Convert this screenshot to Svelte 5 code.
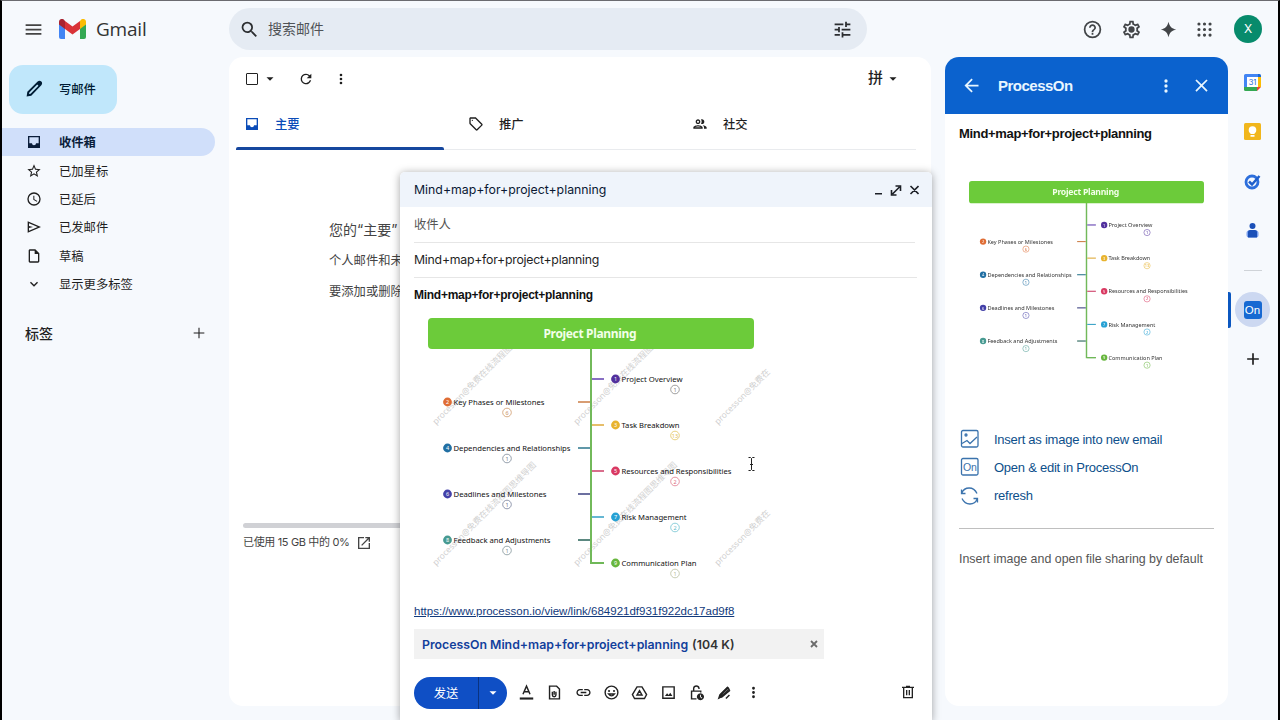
<script>
	const icons = {
		menu: 'M3 18h18v-2H3v2zm0-5h18v-2H3v2zm0-7v2h18V6H3z',
		search:
			'M15.5 14h-.79l-.28-.27A6.47 6.47 0 0 0 16 9.5 6.5 6.5 0 1 0 9.5 16c1.61 0 3.09-.59 4.23-1.57l.27.28v.79l5 4.99L20.49 19l-4.99-5zm-6 0C7.01 14 5 11.99 5 9.5S7.01 5 9.5 5 14 7.01 14 9.5 11.99 14 9.5 14z',
		tune: 'M3 17v2h6v-2H3zM3 5v2h10V5H3zm10 16v-2h8v-2h-8v-2h-2v6h2zM7 9v2H3v2h4v2h2V9H7zm14 4v-2H11v2h10zm-6-4h2V7h4V5h-4V3h-2v6z',
		refresh:
			'M17.65 6.35A7.96 7.96 0 0 0 12 4a8 8 0 1 0 7.73 10h-2.08A5.99 5.99 0 1 1 12 6c1.66 0 3.14.69 4.22 1.78L13 11h7V4l-2.35 2.35z',
		more: 'M12 8a2 2 0 1 0 0-4 2 2 0 0 0 0 4zm0 2a2 2 0 1 0 0 4 2 2 0 0 0 0-4zm0 6a2 2 0 1 0 0 4 2 2 0 0 0 0-4z',
		inbox:
			'M21 3H3v18h18V3zm-2 11h-4c0 1.66-1.35 3-3 3s-3-1.34-3-3H5V5h14v9z',
		star: 'M22 9.24l-7.19-.62L12 2 9.19 8.63 2 9.24l5.46 4.73L5.82 21 12 17.27 18.18 21l-1.63-7.03L22 9.24zM12 15.4l-3.76 2.27 1-4.28-3.32-2.88 4.38-.38L12 6.1l1.71 4.04 4.38.38-3.32 2.88 1 4.28L12 15.4z',
		clock:
			'M12 2a10 10 0 1 0 0 20 10 10 0 0 0 0-20zm0 18a8 8 0 1 1 0-16 8 8 0 0 1 0 16zm.5-13H11v6l5.25 3.15.75-1.23-4.5-2.67z',
		send: 'M2.5 20.5V3.5L22.5 12l-20 8.5zM4.5 17.5L17.5 12 4.500 6.500v4l6 1.500-6 1.500v4z',
		draft: 'M14 2H6c-1.1 0-2 .9-2 2v16c0 1.1.9 2 2 2h12c1.1 0 2-.9 2-2V8l-6-6zM6 20V4h7v5h5v11H6z',
		down: 'M16.59 8.59 12 13.17 7.41 8.59 6 10l6 6 6-6z',
		plus: 'M19 13h-6v6h-2v-6H5v-2h6V5h2v6h6v2z',
		thinPlus: 'M20 12.8h-7.2V20h-1.600v-7.200H4v-1.600h7.200V4h1.600v7.200H20z',
		help: 'M11 18h2v-2h-2v2zm1-16a10 10 0 1 0 0 20 10 10 0 0 0 0-20zm0 18a8 8 0 1 1 0-16 8 8 0 0 1 0 16zm0-14c-2.210 0-4 1.790-4 4h2c0-1.100.9-2 2-2s2 .9 2 2c0 2-3 1.750-3 5h2c0-2.250 3-2.500 3-5 0-2.210-1.790-4-4-4z',
		settings:
			'M19.43 12.98c.04-.32.07-.64.07-.98 0-.34-.03-.66-.07-.98l2.11-1.65c.19-.15.24-.42.12-.64l-2-3.46c-.09-.16-.26-.25-.44-.25-.06 0-.12.01-.17.03l-2.49 1c-.52-.4-1.08-.73-1.69-.98l-.38-2.65C14.46 2.18 14.25 2 14 2h-4c-.25 0-.46.18-.49.42l-.38 2.65c-.61.25-1.17.59-1.69.98l-2.49-1c-.06-.02-.12-.03-.18-.03-.17 0-.34.09-.43.25l-2 3.46c-.13.22-.07.49.12.64l2.11 1.65c-.04.32-.07.65-.07.98 0 .33.03.66.07.98l-2.11 1.65c-.19.15-.24.42-.12.64l2 3.46c.09.16.26.25.44.25.06 0 .12-.01.17-.03l2.49-1c.52.4 1.08.73 1.69.98l.38 2.65c.03.24.24.42.49.42h4c.25 0 .46-.18.49-.42l.38-2.65c.61-.25 1.17-.59 1.69-.98l2.49 1c.06.02.12.03.18.03.17 0 .34-.09.43-.25l2-3.46c.12-.22.07-.49-.12-.64l-2.11-1.65zm-1.98-1.71c.04.31.05.52.05.73 0 .21-.02.43-.05.73l-.14 1.13.89.7 1.08.84-.7 1.21-1.27-.51-1.04-.42-.9.68c-.43.32-.84.56-1.25.73l-1.06.43-.16 1.13-.2 1.35h-1.4l-.19-1.35-.16-1.13-1.06-.43c-.43-.18-.83-.41-1.23-.71l-.91-.7-1.06.43-1.27.51-.7-1.21 1.08-.84.89-.7-.14-1.13c-.03-.31-.05-.54-.05-.74s.02-.43.05-.73l.14-1.13-.89-.7-1.08-.84.7-1.21 1.27.51 1.04.42.9-.68c.43-.32.84-.56 1.25-.73l1.06-.43.16-1.13.2-1.35h1.39l.19 1.35.16 1.13 1.06.43c.43.18.83.41 1.23.71l.91.7 1.06-.43 1.27-.51.7 1.21-1.07.85-.89.7.14 1.13zM12 8.4a3.600 3.600 0 1 0 0 7.200 3.600 3.600 0 0 0 0-7.200z',
		spark: 'M12 1c1.300 6.500 4.500 9.700 11 11-6.500 1.300-9.700 4.500-11 11-1.300-6.500-4.500-9.700-11-11 6.500-1.300 9.700-4.500 11-11z',
		apps: 'M5 3a2 2 0 1 0 0 4 2 2 0 0 0 0-4zm7 0a2 2 0 1 0 0 4 2 2 0 0 0 0-4zm7 0a2 2 0 1 0 0 4 2 2 0 0 0 0-4zM5 10a2 2 0 1 0 0 4 2 2 0 0 0 0-4zm7 0a2 2 0 1 0 0 4 2 2 0 0 0 0-4zm7 0a2 2 0 1 0 0 4 2 2 0 0 0 0-4zM5 17a2 2 0 1 0 0 4 2 2 0 0 0 0-4zm7 0a2 2 0 1 0 0 4 2 2 0 0 0 0-4zm7 0a2 2 0 1 0 0 4 2 2 0 0 0 0-4z',
		tag: 'M21.410 11.580l-9-9C12.050 2.220 11.550 2 11 2H4c-1.100 0-2 .9-2 2v7c0 .55.22 1.050.59 1.420l9 9c.78.78 2.040.78 2.820 0l7-7c.78-.78.78-2.060 0-2.840zM13 20.010L4 11V4h7l9 9-7 7.010zM6.500 5.500a1 1 0 1 0 0 2 1 1 0 0 0 0-2z',
		people:
			'M9 13.750c-2.340 0-7 1.170-7 3.500V19h14v-1.750c0-2.330-4.660-3.500-7-3.500zM4.340 17c.84-.58 2.870-1.250 4.660-1.250s3.820.67 4.660 1.250H4.340zM9 12c1.930 0 3.500-1.570 3.500-3.500S10.930 5 9 5 5.500 6.570 5.500 8.500 7.070 12 9 12zm0-5c.83 0 1.500.67 1.500 1.500S9.830 10 9 10s-1.500-.67-1.500-1.500S8.170 7 9 7zm7.040 6.810c1.160.84 1.960 1.960 1.960 3.440V19h4v-1.750c0-2.020-3.500-3.170-5.960-3.440zM15 12c1.930 0 3.500-1.570 3.500-3.500S16.930 5 15 5c-.54 0-1.040.13-1.500.35.63.89 1 1.980 1 3.150s-.37 2.260-1 3.150c.46.22.96.35 1.500.35z',
		caret: 'M6 9l6 6 6-6z',
		pencil:
			'M3 21l.8-5.300L15.600 4c1.200-1.200 3-1.200 4.200 0s1.200 3 0 4.200L8.300 20.200 3 21zm2.800-2.800l1.700-.3 9-9-1.400-1.400-9 9-.3 1.700z',
		back: 'M20 11H7.830l5.590-5.590L12 4l-8 8 8 8 1.410-1.410L7.830 13H20v-2z',
		close: 'M19 6.410L17.590 5 12 10.590 6.410 5 5 6.410 10.590 12 5 17.590 6.410 19 12 13.410 17.590 19 19 17.590 13.410 12z',
		link: 'M3.900 12c0-1.710 1.390-3.100 3.100-3.100h4V7H7c-2.760 0-5 2.240-5 5s2.240 5 5 5h4v-1.900H7c-1.710 0-3.100-1.390-3.100-3.100zM8 13h8v-2H8v2zm9-6h-4v1.900h4c1.710 0 3.100 1.390 3.100 3.100s-1.390 3.100-3.100 3.100h-4V17h4c2.760 0 5-2.240 5-5s-2.240-5-5-5z',
		open: 'M3 3h9v2H5v14h14v-7h2v9H3zM14 3h7v7h-2V6.410l-9.830 9.830-1.410-1.410L17.590 5H14z'
	};

	// outline icons of the composer toolbar, in order
	const tools = [
		['M7 14.5 12 3l5 11.5M8.700 11h6.600', 'M2.500 19h19v3h-19z'],
		['M5 3h10l4 4v14H5zM9 11v4.500a2.500 2.500 0 0 0 5 0V11M11.500 10v5', ''],
		null,
		['M12 3a9 9 0 1 0 0 18 9 9 0 0 0 0-18zM7.800 14q4.200 5.500 8.400 0z', 'M8.500 8.300a1.400 1.400 0 1 0 .1 0zM15.500 8.300a1.400 1.400 0 1 0 .1 0z'],
		['M8.500 4h7L22 15l-3 5.500H5L2 15zM12 9.500l3.500 6h-7z', ''],
		['M4 4h16v16H4z', 'M7 17l3-4 2.200 2.500L14.500 12.500 17.500 17z'],
		['M12 21H5V10h13v2M8 10V6a3.800 3.800 0 0 1 7.500 0v1', 'M17.500 13a5 5 0 1 0 .1 0zM17 15h1.200v3l2 1.500-.7 1-2.500-2z'],
		['M4 20 5.500 15.500 16 5l2.500 2.500L8 18zM14 20.500l5-5', 'M4 20l2-6L16.500 3.500l2 2L9 15l10-7 1.500 1.500L9 19z']
	];

	const nav = [
		['inbox', '收件箱'],
		['star', '已加星标'],
		['clock', '已延后'],
		['send', '已发邮件'],
		['draft', '草稿'],
		['down', '显示更多标签']
	];

	const tabs = [
		['inbox', '主要'],
		['tag', '推广'],
		['people', '社交']
	];

	// x/y are the centre of the numbered dot, w the drawn width of the label
	const nodes = [
		{ n: 1, x: 187.5, y: 61, w: 61, text: 'Project Overview', color: '#51309d', line: '#6b4bb5', count: 1, badge: '#777' },
		{ n: 2, x: 19.5, y: 84, w: 91, text: 'Key Phases or Milestones', color: '#df6d35', line: '#cf8551', count: 6, badge: '#c98d57' },
		{ n: 3, x: 187.5, y: 107, w: 58, text: 'Task Breakdown', color: '#e8b32e', line: '#e0ae45', count: 13, badge: '#e0bd4c' },
		{ n: 4, x: 19.5, y: 130, w: 117, text: 'Dependencies and Relationships', color: '#216fa3', line: '#397f94', count: 1, badge: '#6a7889' },
		{ n: 5, x: 187.5, y: 153, w: 110, text: 'Resources and Responsibilities', color: '#d93962', line: '#d04a70', count: 2, badge: '#dc6a80' },
		{ n: 6, x: 19.5, y: 176, w: 93, text: 'Deadlines and Milestones', color: '#4340a8', line: '#484d89', count: 1, badge: '#66708c' },
		{ n: 7, x: 187.5, y: 199, w: 65, text: 'Risk Management', color: '#26a1d4', line: '#40a5c8', count: 2, badge: '#5fbccb' },
		{ n: 8, x: 19.5, y: 222, w: 97, text: 'Feedback and Adjustments', color: '#479a91', line: '#326b61', count: 1, badge: '#71858b' },
		{ n: 9, x: 187.5, y: 245, w: 75, text: 'Communication Plan', color: '#67b63d', line: '#6fb858', count: 1, badge: '#b2b794' }
	];

	const full = 'processon@免费在线流程图思维导图';
	const watermarks = [
		[8, 107, full],
		[149, 107, full],
		[290, 107, 'processon@免费在'],
		[8, 248, full],
		[149, 248, full],
		[290, 248, 'processon@免费在']
	];
</script>

{#snippet icon(name, size = 18)}
	<svg class="icon" width={size} height={size} viewBox="0 0 24 24"><path d={icons[name]} fill-rule="evenodd" /></svg>
{/snippet}

{#snippet mindMap(width, marked)}
	<svg class="map" class:small={!marked} {width} viewBox="0 0 350 262">
		{#if marked}
			{#each watermarks as [x, y, text]}
				<text class="watermark" transform="translate({x} {y}) rotate(-45)">{text}</text>
			{/each}
		{/if}
		<path d="M163 30V245H176" fill="none" stroke="#72b95a" stroke-width="2" />
		<rect width="326" height="31" rx="4" fill="#6ccb3a" />
		<text class="root" x="162" y="20" text-anchor="middle" textLength="93">Project Planning</text>
		{#each nodes as node}
			{@const left = node.x < 100}
			<path d={left ? `M150 ${node.y}h12` : `M164 ${node.y}h12`} stroke={node.line} stroke-width="1.6" />
			<circle cx={node.x} cy={node.y} r="4.4" fill={node.color} />
			<text class="digit" x={node.x} y={node.y + 2.3}>{node.n}</text>
			<text class="label" x={node.x + 6} y={node.y + 3} textLength={node.w} lengthAdjust="spacingAndGlyphs">{node.text}</text>
			<circle cx={left ? 79 : 247} cy={node.y + 10.5} r="4.3" fill="none" stroke={marked ? node.badge : node.color} stroke-width=".7" />
			<text class="count" x={left ? 79 : 247} y={node.y + 12.6} fill={marked ? node.badge : node.color}>{node.count}</text>
		{/each}
	</svg>
{/snippet}

<div class="app">
	<header>
		<div class="brand">
			{@render icon('menu', 21)}
			<svg class="logo" width="27" height="20" viewBox="0 0 27 20">
				<path d="M0 4v14q0 2 2 2h4V8z" fill="#4285f4" />
				<path d="M21 8v12h4q2 0 2-2V4z" fill="#34a853" />
				<path d="M21 2v8l6-4.500V3c0-3-3-4-5-2.300z" fill="#fbbc04" />
				<path d="M6 10V2l7.500 5.500L21 2v8l-7.500 5.500z" fill="#d93338" />
				<path d="M0 3v2.500L6 10V2L5 .7C3-1 0 0 0 3z" fill="#a82330" />
			</svg>
			<span class="brand-name">Gmail</span>
		</div>
		<div class="search">
			{@render icon('search', 21)}
			<span>搜索邮件</span>
			{@render icon('tune', 21)}
		</div>
		<div class="account">
			{@render icon('help', 21)}
			{@render icon('settings', 21)}
			{@render icon('spark', 17)}
			{@render icon('apps', 19)}
			<div class="avatar">X</div>
		</div>
	</header>

	<div class="columns">
		<aside class="sidebar">
			<button class="write">{@render icon('pencil', 21)}<span>写邮件</span></button>
			<nav>
				{#each nav as [name, label], i}
					<div class="nav-item" class:active={i === 0}>{@render icon(name, 16)}<span>{label}</span></div>
				{/each}
			</nav>
			<div class="labels"><span>标签</span>{@render icon('thinPlus', 16)}</div>
		</aside>

		<main>
			<div class="toolbar">
				<i class="checkbox"></i>
				{@render icon('caret', 14)}
				<div class="reload">{@render icon('refresh', 16)}</div>
				{@render icon('more', 16)}
				<div class="input-tool"><b>拼</b>{@render icon('caret', 14)}</div>
			</div>
			<div class="tabs">
				{#each tabs as [name, label], i}
					<div class="tab" class:active={i === 0}>{@render icon(name, 16)}<span>{label}</span></div>
				{/each}
			</div>
			<div class="empty">
				<p class="lead">您的“主要”</p>
				<p>个人邮件和未</p>
				<p>要添加或删除</p>
			</div>
			<div class="storage">
				<div class="storage-bar"></div>
				<div class="storage-text"><span>已使用 15 GB 中的 0%</span>{@render icon('open', 16)}</div>
			</div>
		</main>

		<section class="panel">
			<div class="panel-head">
				{@render icon('back', 21)}
				<h2>ProcessOn</h2>
				{@render icon('more', 20)}
				{@render icon('close', 21)}
			</div>
			<div class="panel-body">
				<h3>Mind+map+for+project+planning</h3>
				<div class="preview">{@render mindMap(252.3, false)}</div>
				<div class="actions">
					<div class="action">
						<svg width="20" height="20" viewBox="0 0 20 20"><rect x="2.500" y="1.500" width="16.500" height="16.500" rx="1.500" /><circle cx="7" cy="6" r="1" /><path d="M3 14.500l5-3 3 3 7-6.500" /></svg>
						Insert as image into new email
					</div>
					<div class="action">
						<svg width="20" height="20" viewBox="0 0 20 20"><rect x="2.500" y="1.500" width="16.500" height="16.500" rx="1.500" /><text x="4" y="14">On</text></svg>
						Open &amp; edit in ProcessOn
					</div>
					<div class="action">
						<svg width="20" height="20" viewBox="0 0 20 20"><path d="M2.500 3.500v4h4M2.800 7C5.500.5 14.500 0 18 7.500M18.500 16.500v-4h-4M18.200 13C15.500 19.500 6.500 20 3 12.500" /></svg>
						refresh
					</div>
				</div>
				<p class="hint">Insert image and open file sharing by default</p>
			</div>
		</section>

		<aside class="rail">
			<svg width="17" height="17" viewBox="0 0 17 17"><path d="M0 1.500Q0 0 1.500 0H14v3H3v11H0z" fill="#4285f4" /><path d="M14 0h1.500Q17 0 17 1.500V3h-3z" fill="#1967d2" /><path d="M14 3h3v10h-3z" fill="#fbbc04" /><path d="M0 13h13v4H1.500Q0 17 0 15.500z" fill="#34a853" /><path d="M13 13h4l-4 4z" fill="#ea4335" /><path d="M3 3h11v10H3z" fill="#fff" /><text x="8.500" y="11" text-anchor="middle" font-size="7.500" fill="#1967d2">31</text></svg>
			<svg width="17" height="17" viewBox="0 0 17 17"><rect width="17" height="17" rx="1.500" fill="#f1b61c" /><circle cx="8.500" cy="7" r="3.800" fill="#fff" /><path d="M6.500 9h4v2h-4zM6.500 12h4v1.700h-4z" fill="#fff" /></svg>
			<svg width="17" height="17" viewBox="0 0 17 17"><circle cx="8" cy="9" r="6" fill="none" stroke="#2d6fdc" stroke-width="2.800" /><path d="M5 8.500l3 3L15.500 3" fill="none" stroke="#1f5fcb" stroke-width="2.500" /></svg>
			<svg width="17" height="17" viewBox="0 0 17 17"><circle cx="8.500" cy="4" r="3" fill="#1b50b8" /><rect x="2.500" y="8.500" width="12" height="7" rx="2.500" fill="#7aa0ee" /><path d="M4 9.500q0-1.500 2-1.500h5q2 0 2 1.500v6H4z" fill="#1b50b8" /></svg>
			<hr />
			<div class="addon"><div class="addon-icon">On</div></div>
			{@render icon('plus', 20)}
		</aside>
	</div>

	<div class="composer">
		<div class="composer-head">
			<span>Mind+map+for+project+planning</span>
			<svg width="45" height="14" viewBox="0 0 45 14"><path d="M1 10.700h7M18.500 11l7-7M21.500 3h5v5M17.500 7v5h5M36.500 3l8 8M44.500 3l-8 8" /></svg>
		</div>
		<div class="composer-body">
			<div class="field to">收件人</div>
			<div class="field subject">Mind+map+for+project+planning</div>
			<b class="doc-title">Mind+map+for+project+planning</b>
			<div class="doc-map">{@render mindMap(350, true)}</div>
			<a href="https://www.processon.io/view/link/684921df931f922dc17ad9f8">https://www.processon.io/view/link/684921df931f922dc17ad9f8</a>
			<div class="attachment">
				<span class="file">ProcessOn Mind+map+for+project+planning</span>
				<span class="size">(104 K)</span>
				<svg width="8" height="8" viewBox="0 0 8 8"><path d="M1 1l6 6M7 1L1 7" stroke="#6b6b6b" stroke-width="1.800" /></svg>
			</div>
			<div class="composer-tools">
				<div class="send-group">
					<button class="send">发送</button>
					<button class="send-more">{@render icon('caret', 14)}</button>
				</div>
				<div class="tools">
					{#each tools as tool}
						{#if tool}
							<svg class="tool" width="17" height="17" viewBox="0 0 24 24"><path class="stroke" d={tool[0]} /><path d={tool[1]} /></svg>
						{:else}
							{@render icon('link', 17)}
						{/if}
					{/each}
					{@render icon('more', 17)}
				</div>
				<svg class="trash" width="16" height="16" viewBox="0 0 24 24"><path class="stroke" d="M5.500 6v14.500h13V6M3 5h18M9 3.500h6M10 9v8M14 9v8" /></svg>
			</div>
		</div>
	</div>

	<svg class="cursor" width="9" height="16" viewBox="0 0 9 16"><path d="M1.500 1.500h2l1 1 1-1h2M4.500 2.500v11M1.500 14.500h2l1-1 1 1h2M3 8.500h3" /></svg>
</div>

<style>
	:global(body) {
		margin: 0;
		overflow: hidden;
	}
	.app {
		position: relative;
		box-sizing: border-box;
		width: 1280px;
		height: 720px;
		overflow: hidden;
		border: solid #000;
		border-width: 0 2px;
		border-top: 1px solid #6b6b70;
		background: #f6f9fd;
		color: #1f1f1f;
		font-family: Inter, 'Noto Sans CJK SC', sans-serif;
		font-size: 12.3px;
	}
	button {
		border: 0;
		padding: 0;
		font: inherit;
	}
	p,
	h2,
	h3 {
		margin: 0;
	}
	svg {
		display: block;
		flex: none;
	}
	.icon {
		fill: currentColor;
	}

	header {
		display: flex;
		align-items: center;
		height: 56px;
	}
	.brand {
		display: flex;
		align-items: center;
		width: 206px;
		padding-left: 21px;
		color: #444;
	}
	.logo {
		margin-left: 15px;
	}
	.brand-name {
		margin-left: 10px;
		font-family: 'Open Sans', sans-serif;
		font-size: 19px;
		letter-spacing: -0.2px;
		color: #333;
	}
	.search {
		display: flex;
		align-items: center;
		box-sizing: border-box;
		width: 638px;
		height: 42px;
		padding: 0 14px 0 10px;
		border-radius: 21px;
		background: #e5ebf3;
		color: #2b2d30;
	}
	.search span {
		flex: 1;
		margin-left: 8px;
		padding-bottom: 2px;
		font-size: 14px;
		color: #505357;
	}
	.account {
		display: flex;
		align-items: center;
		flex: 1;
		justify-content: flex-end;
		padding-right: 16px;
		color: #424548;
	}
	.account :global(svg) {
		margin-right: 18px;
	}
	.avatar {
		width: 28px;
		height: 28px;
		margin-left: 2px;
		border-radius: 50%;
		background: #078b6c;
		color: #fff;
		font-size: 12px;
		line-height: 28px;
		text-align: center;
	}

	.columns {
		display: flex;
		height: 649px;
	}
	.sidebar {
		width: 227px;
	}
	.write {
		display: flex;
		align-items: center;
		width: 108px;
		height: 49px;
		margin: 8px 0 14px 7px;
		padding: 0 0 2px 15px;
		gap: 14px;
		border-radius: 14px;
		background: #c0e7fb;
		color: #001d35;
		font-weight: 500;
	}
	.nav-item {
		display: flex;
		align-items: center;
		width: 213px;
		height: 28.4px;
		box-sizing: border-box;
		padding-left: 24px;
		gap: 17px;
		border-radius: 0 14px 14px 0;
	}
	.nav-item.active {
		background: #d0dffa;
		color: #0a1d3a;
		font-weight: 700;
	}
	.labels {
		display: flex;
		align-items: center;
		justify-content: space-between;
		width: 182px;
		height: 28px;
		margin: 21px 0 0 23px;
		font-size: 14px;
		font-weight: 500;
	}

	main {
		display: flex;
		flex-direction: column;
		width: 702px;
		border-radius: 14px;
		background: #fff;
	}
	.toolbar {
		display: flex;
		align-items: center;
		height: 43px;
		padding: 0 31px 0 17px;
	}
	.checkbox {
		width: 10px;
		height: 10px;
		margin-right: 5px;
		border: 1.5px solid #222;
		border-radius: 1px;
	}
	.reload {
		margin: 0 19px 0 21px;
	}
	.input-tool {
		display: flex;
		align-items: center;
		gap: 3px;
		margin-left: auto;
		font-size: 15px;
		line-height: 20px;
	}
	.input-tool b {
		padding-bottom: 1px;
		font-weight: 500;
	}
	.tabs {
		display: flex;
		height: 49px;
		margin: 0 15px 0 7px;
		border-bottom: 1px solid #e9ebee;
	}
	.tab {
		position: relative;
		display: flex;
		align-items: center;
		width: 216px;
		box-sizing: border-box;
		padding: 0 0 1px 8px;
		gap: 15px;
		margin-right: 8px;
		font-weight: 500;
	}
	.tab span {
		padding-bottom: 1px;
	}
	.tab.active {
		color: #0b4cb8;
	}
	.tab.active::after {
		content: '';
		position: absolute;
		bottom: -1px;
		left: 0;
		width: 208px;
		height: 3px;
		border-radius: 2px 2px 0 0;
		background: #16479e;
	}
	.empty {
		margin: 64px 0 0 100px;
		color: #444;
		line-height: 31px;
	}
	.lead {
		font-size: 14px;
	}
	.storage {
		margin: auto 15px 155px 14px;
	}
	.storage-bar {
		height: 5px;
		border-radius: 3px;
		background: #d0d1d5;
	}
	.storage-text {
		display: flex;
		align-items: center;
		gap: 7px;
		margin-top: 6px;
		font-size: 11px;
		letter-spacing: -0.35px;
		line-height: 17px;
		color: #444;
	}

	.panel {
		display: flex;
		flex-direction: column;
		width: 283px;
		margin-left: 14px;
		overflow: hidden;
		border-radius: 14px;
		background: #fff;
		font-family: 'Liberation Sans', Arial, sans-serif;
	}
	.panel-head {
		display: flex;
		align-items: center;
		height: 57px;
		box-sizing: border-box;
		padding: 0 16px;
		background: #0b62ce;
		color: #e8f6ff;
	}
	.panel-head h2 {
		flex: 1;
		margin-left: 16px;
		font-size: 15px;
		letter-spacing: -0.5px;
	}
	.panel-head :global(svg:last-child) {
		margin-left: 15px;
	}
	.panel-body {
		padding: 11px 14px 0;
	}
	h3 {
		font-size: 13px;
		line-height: 17px;
		letter-spacing: -0.33px;
		color: #111;
	}
	.preview {
		height: 230px;
		padding: 39px 0 0 10px;
		filter: blur(0.3px);
	}
	.actions {
		margin-top: 14px;
		padding-bottom: 18px;
		border-bottom: 1px solid #bfbfbf;
	}
	.action {
		display: flex;
		align-items: center;
		height: 28.3px;
		gap: 15px;
		font-size: 13px;
		letter-spacing: -0.25px;
		color: #0d4f8b;
	}
	.action svg {
		fill: none;
		stroke: #3b73ad;
		stroke-width: 1.3;
	}
	.action svg text {
		fill: #3b73ad;
		stroke: none;
		font-size: 10.5px;
	}
	.hint {
		margin-top: 23px;
		font-size: 12.4px;
		line-height: 15px;
		color: #555;
	}

	.rail {
		display: flex;
		flex-direction: column;
		align-items: center;
		width: 49px;
		padding-top: 16.5px;
	}
	.rail > :global(svg) {
		margin-bottom: 32.5px;
	}
	.rail hr {
		width: 18px;
		height: 1px;
		margin: -2px 0 21.5px;
		border: 0;
		background: #cfd3d8;
	}
	.addon {
		position: relative;
		display: grid;
		place-items: center;
		width: 35px;
		height: 35px;
		margin-bottom: 22px;
		border-radius: 50%;
		background: #ccd8f1;
	}
	.addon::before {
		content: '';
		position: absolute;
		left: -7px;
		width: 3px;
		height: 36px;
		border-radius: 0 2px 2px 0;
		background: #0b57c0;
	}
	.addon-icon {
		width: 18px;
		height: 18px;
		border-radius: 3px;
		background: #1769d2;
		color: #fff;
		font: 11.5px/18px 'Liberation Sans', sans-serif;
		text-align: center;
	}

	.composer {
		position: absolute;
		left: 398px;
		top: 171px;
		width: 531.5px;
		height: 549px;
		border-radius: 5px 5px 0 0;
		background: #fff;
		box-shadow: 0 1px 9px rgba(0, 0, 0, 0.36);
	}
	.composer-head {
		display: flex;
		align-items: center;
		justify-content: space-between;
		height: 35px;
		padding: 0 13px 0 14px;
		border-radius: 5px 5px 0 0;
		background: #eff4fb;
		color: #0a1833;
	}
	.composer-head svg {
		fill: none;
		stroke: #1c1f26;
		stroke-width: 1.6;
	}
	.composer-body {
		display: flex;
		flex-direction: column;
		align-items: flex-start;
		padding: 0 14px;
	}
	.field {
		width: 503px;
		height: 34.5px;
		border-bottom: 1px solid #e6e6e6;
		line-height: 34px;
	}
	.to {
		width: 501px;
		line-height: 35px;
		color: #555;
	}
	.subject {
		letter-spacing: -0.25px;
	}
	.doc-title {
		margin-top: 10px;
		font: bold 12px/15px 'Liberation Sans', sans-serif;
		letter-spacing: -0.27px;
		color: #111;
	}
	.doc-map {
		height: 262px;
		margin: 15px 0 0 14px;
	}
	.composer a {
		margin-top: 24px;
		font: 11.5px/15px 'Liberation Sans', sans-serif;
		color: #123a7c;
	}
	.attachment {
		display: flex;
		align-items: center;
		width: 410px;
		height: 30px;
		box-sizing: border-box;
		margin-top: 10px;
		padding: 0 6px 0 8px;
		background: #f2f2f2;
		font-weight: 600;
	}
	.file {
		color: #123f9c;
	}
	.size {
		flex: 1;
		margin-left: 4px;
		color: #333;
	}
	.composer-tools {
		display: flex;
		align-items: center;
		width: 502px;
		margin-top: 18px;
	}
	.send-group {
		display: flex;
		width: 93px;
		height: 32px;
		overflow: hidden;
		border-radius: 16px;
		background: #0f4fc5;
	}
	.send {
		width: 64px;
		padding-bottom: 1px;
		background: none;
		color: #fff;
	}
	.send-more {
		display: grid;
		place-items: center;
		flex: 1;
		border-left: 1px solid #0a3380;
		background: none;
		color: #fff;
	}
	.tools {
		display: flex;
		flex: 1;
		gap: 11.35px;
		margin-left: 11px;
		padding-bottom: 2px;
	}
	.trash {
		margin-bottom: 2px;
	}
	.tool,
	.trash {
		fill: #222;
	}
	.stroke {
		fill: none;
		stroke: #222;
		stroke-width: 2;
	}

	.map {
		overflow: hidden;
		font-family: 'Noto Sans', sans-serif;
	}
	.map text {
		white-space: pre;
	}
	.root {
		fill: #f2ffe8;
		font-size: 12px;
		font-weight: 700;
	}
	.label {
		fill: #111;
		font-size: 7.8px;
	}
	.small .label {
		fill: #333;
	}
	.digit,
	.count {
		font-size: 5.5px;
		text-anchor: middle;
	}
	.digit {
		fill: #fff;
	}
	.watermark {
		fill: #d0d0d0;
		font-family: 'Noto Sans', 'Noto Sans CJK SC', sans-serif;
		font-size: 8.5px;
	}
	.cursor {
		position: absolute;
		left: 745px;
		top: 455px;
		fill: none;
		stroke: #222;
	}
</style>
